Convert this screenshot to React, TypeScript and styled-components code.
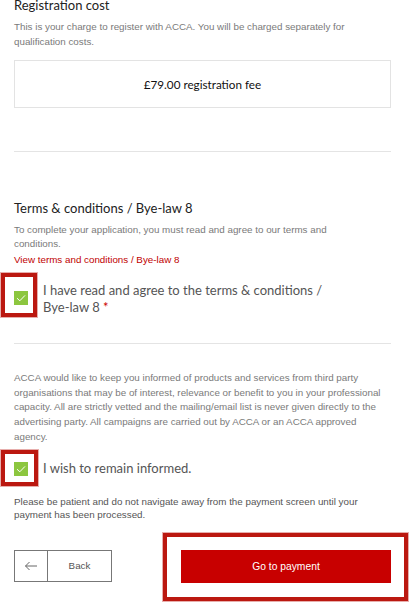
import React from "react";
import styled, { createGlobalStyle } from "styled-components";

const GlobalStyle = createGlobalStyle`
  html, body {
    margin: 0;
    padding: 0;
    background: #ffffff;
    overflow: hidden;
  }
  * {
    box-sizing: border-box;
  }
`;

const headingFont = `Lato, "Open Sans", sans-serif`;
const bodyFont = `"Liberation Sans", Arial, sans-serif`;

type Ring = { top: number; left: number; right: number; bottom: number };

export default function App() {
  return (
    <>
      <GlobalStyle />
      <Page>
        <Section>
          <Heading $top={-3}>Registration cost</Heading>
          <Text $top={7}>
            This is your charge to register with ACCA. You will be charged separately for
            qualification costs.
          </Text>
          <FeeBox>£79.00 registration fee</FeeBox>
        </Section>

        <Divider $top={43} />

        <Section>
          <Heading $top={48}>Terms &amp; conditions / Bye-law 8</Heading>
          <Text $top={7} $tight $narrow>
            To complete your application, you must read and agree to our terms and
            conditions.
          </Text>
          <TermsLink>
            <a href="#">View terms and conditions</a> / <a href="#">Bye-law 8</a>
          </TermsLink>
          <CheckRow $top={15}>
            <Box $offset={9} $ring={{ top: 18, left: 13, right: 9, bottom: 12 }}>
              <Tick />
            </Box>
            <CheckLabel>
              I have read and agree to the terms &amp; conditions /<br />
              Bye-law 8 <Required>*</Required>
            </CheckLabel>
          </CheckRow>
        </Section>

        <Divider $top={27} />

        <Section>
          <Text $top={27}>
            ACCA would like to keep you informed of products and services from third party
            organisations that may be of interest, relevance or benefit to you in your
            professional capacity. All are strictly vetted and the mailing/email list is never
            given directly to the advertising party. All campaigns are carried out by ACCA or
            an ACCA approved agency.
          </Text>
          <CheckRow $top={15}>
            <Box $offset={2} $ring={{ top: 12, left: 13, right: 10, bottom: 10 }}>
              <Tick />
            </Box>
            <CheckLabel>I wish to remain informed.</CheckLabel>
          </CheckRow>
          <Note>
            Please be patient and do not navigate away from the payment screen until your
            payment has been processed.
          </Note>
        </Section>

        <Actions>
          <BackButton type="button">
            <BackIcon>
              <svg width="14" height="10" viewBox="0 0 14 10" fill="none">
                <path d="M13 5H1.5M5.5 1L1.5 5L5.5 9" stroke="#666" strokeWidth="1" />
              </svg>
            </BackIcon>
            <BackText>Back</BackText>
          </BackButton>
          <PayButton type="button" $ring={{ top: 17, left: 18, right: 17, bottom: 18 }}>
            Go to payment
          </PayButton>
        </Actions>
      </Page>
    </>
  );
}

function Tick() {
  return (
    <svg width="10" height="8" viewBox="0 0 10 8" fill="none">
      <path d="M1 4.2L3.8 6.8L9 1.4" stroke="#ffffff" strokeWidth="1" />
    </svg>
  );
}

const Page = styled.div`
  width: 410px;
  height: 602px;
  padding: 0 19px 0 14px;
  font-family: ${bodyFont};
`;

const Section = styled.section`
  display: flex;
  flex-direction: column;
`;

const Heading = styled.h2<{ $top: number }>`
  margin: ${(p) => p.$top}px 0 0;
  font-family: ${headingFont};
  font-size: 13px;
  line-height: 16px;
  font-weight: 400;
  color: #222;
`;

const Text = styled.p<{ $top: number; $tight?: boolean; $narrow?: boolean }>`
  margin: ${(p) => p.$top}px 0 0;
  max-width: ${(p) => (p.$narrow ? "345px" : "none")};
  font-size: 9.8px;
  line-height: ${(p) => (p.$tight ? "13.8px" : "14.7px")};
  color: #7a7a7a;
`;

const FeeBox = styled.div`
  margin-top: 11px;
  height: 48px;
  border: 1px solid #e3e3e3;
  display: flex;
  align-items: center;
  justify-content: center;
  font-family: ${headingFont};
  font-size: 11.7px;
  color: #111;
`;

const Divider = styled.hr<{ $top: number }>`
  margin: ${(p) => p.$top}px 0 0;
  border: 0;
  border-top: 1px solid #e4e4e4;
  height: 0;
`;

const TermsLink = styled.div`
  margin-top: 1px;
  font-size: 9.8px;
  line-height: 15px;
  color: #c00000;

  a {
    color: #c00000;
    text-decoration: none;
  }
`;

const CheckRow = styled.div<{ $top: number }>`
  margin-top: ${(p) => p.$top}px;
  display: flex;
  align-items: flex-start;
  gap: 15px;
`;

const Box = styled.span<{ $ring: Ring; $offset: number }>`
  position: relative;
  flex: none;
  width: 14px;
  height: 14px;
  margin-top: ${(p) => p.$offset}px;
  background: #8cc63f;
  display: flex;
  align-items: center;
  justify-content: center;

  &::before {
    content: "";
    position: absolute;
    top: -${(p) => p.$ring.top}px;
    left: -${(p) => p.$ring.left}px;
    right: -${(p) => p.$ring.right}px;
    bottom: -${(p) => p.$ring.bottom}px;
    border: 4px solid #bb1810;
    box-shadow: 0 0 0 1px rgba(187, 24, 16, 0.35);
  }
`;

const CheckLabel = styled.span`
  font-family: ${headingFont};
  font-size: 13px;
  line-height: 17px;
  color: #555;
`;

const Required = styled.span`
  color: #cc0000;
`;

const Note = styled.p`
  margin: 18px 0 0;
  font-size: 9.8px;
  line-height: 13.5px;
  color: #555;
`;

const Actions = styled.div`
  margin-top: 28px;
  display: flex;
  justify-content: space-between;
  align-items: flex-start;
`;

const BackButton = styled.button`
  width: 98px;
  height: 32px;
  padding: 0;
  display: flex;
  border: 1px solid #777;
  background: #fff;
  cursor: pointer;
`;

const BackIcon = styled.span`
  width: 33px;
  height: 100%;
  border-right: 1px solid #777;
  display: flex;
  align-items: center;
  justify-content: center;
`;

const BackText = styled.span`
  flex: 1;
  align-self: center;
  font-family: ${bodyFont};
  font-size: 9.8px;
  color: #555;
`;

const PayButton = styled.button<{ $ring: Ring }>`
  position: relative;
  width: 210px;
  height: 33px;
  border: 0;
  background: #c80000;
  color: #fff;
  font-family: ${bodyFont};
  font-size: 10.3px;
  cursor: pointer;

  &::before {
    content: "";
    position: absolute;
    top: -${(p) => p.$ring.top}px;
    left: -${(p) => p.$ring.left}px;
    right: -${(p) => p.$ring.right}px;
    bottom: -${(p) => p.$ring.bottom}px;
    border: 4px solid #bb1810;
    box-shadow: 0 0 0 1px rgba(187, 24, 16, 0.35);
    pointer-events: none;
  }
`;
